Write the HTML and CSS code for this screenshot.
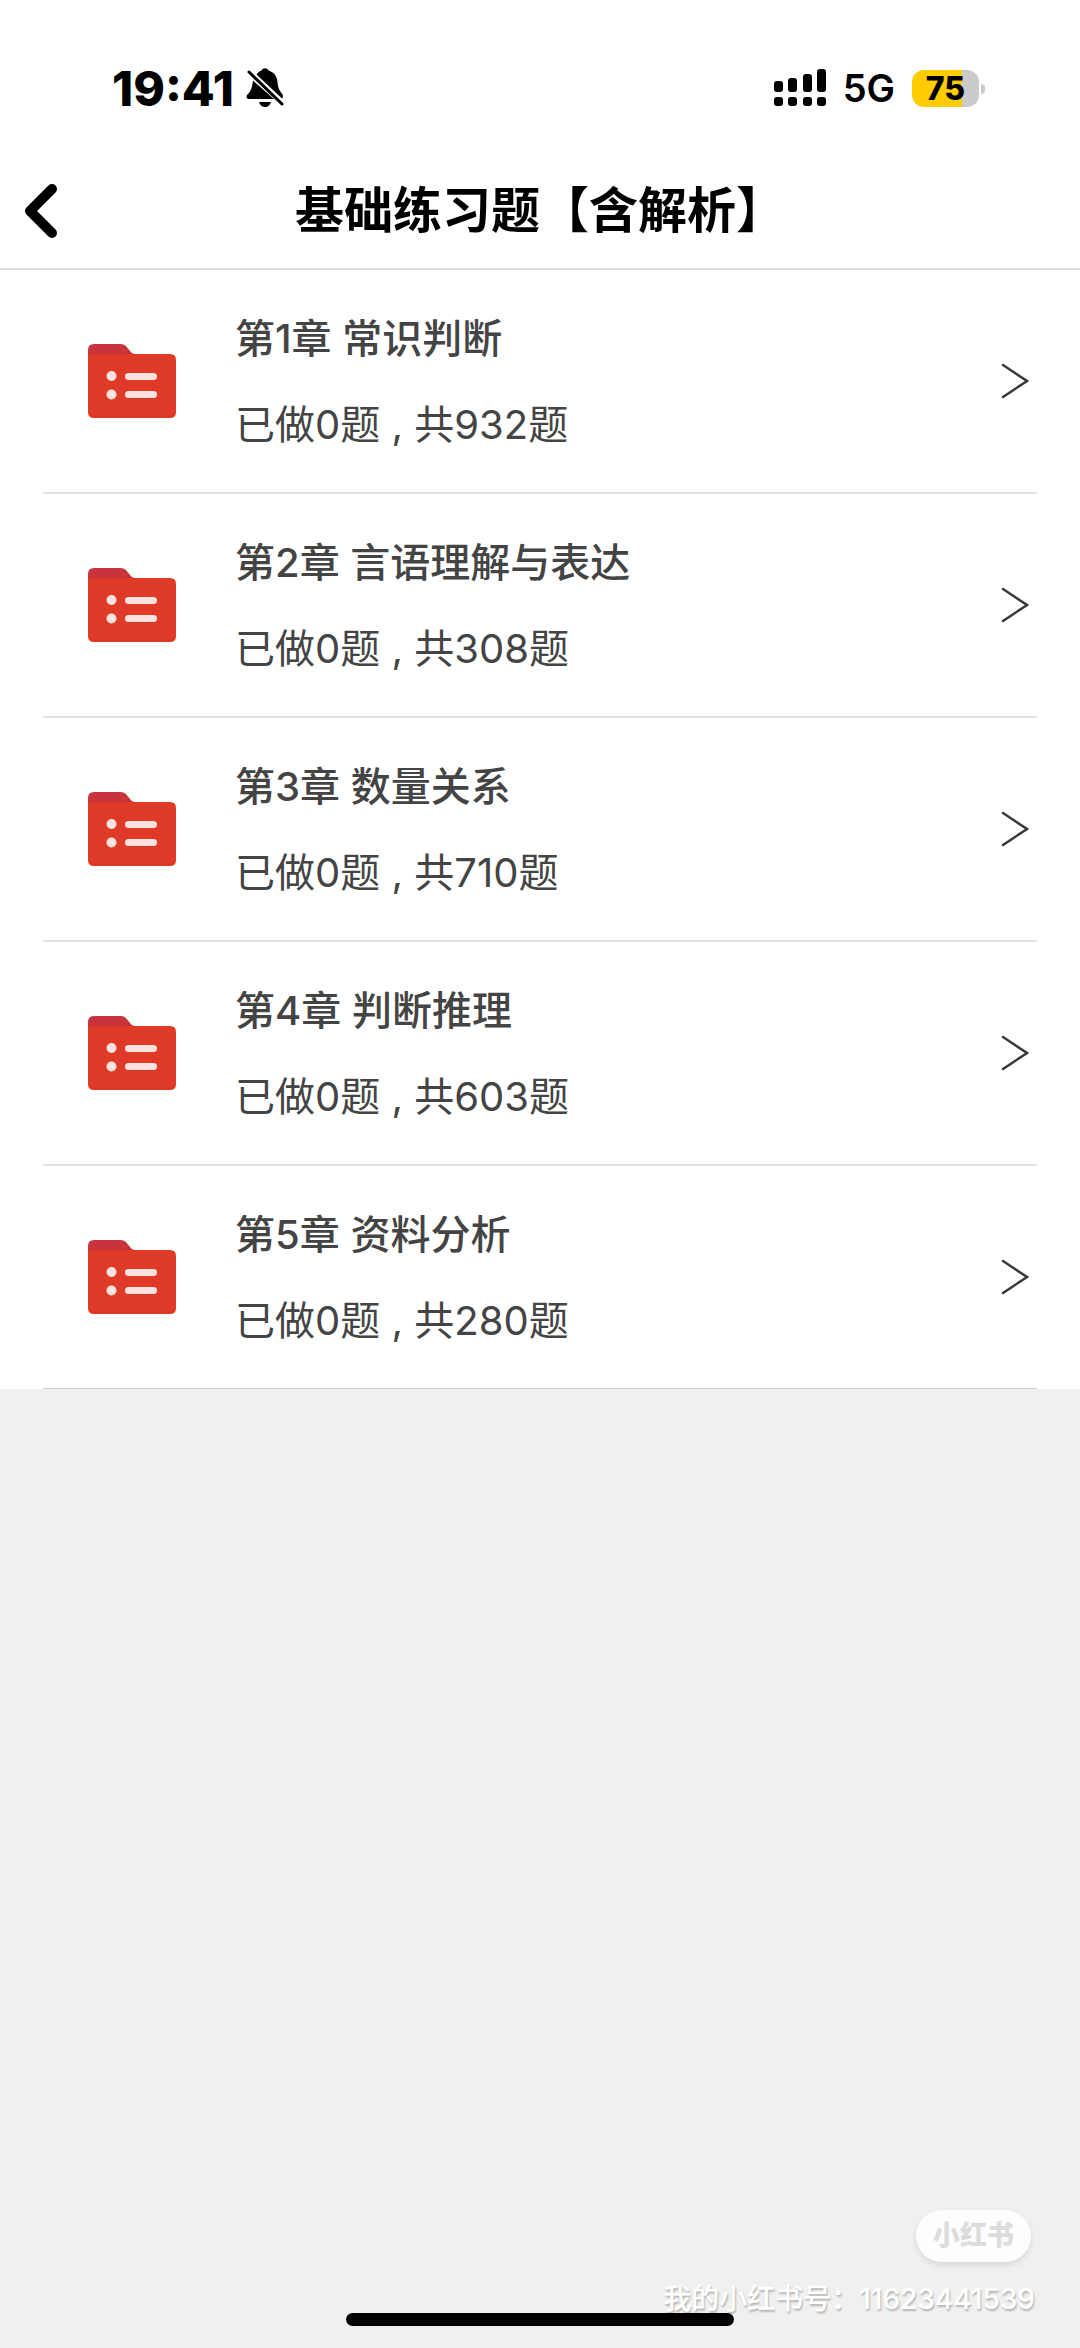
FILE: index.html
```html
<!DOCTYPE html>
<html lang="zh-CN">
<head>
    <meta charset="UTF-8">
    <meta name="viewport" content="width=device-width, initial-scale=1.0">
    <title>基础练习题【含解析】</title>
    <link rel="stylesheet" href="styles.css">
</head>
<body>
    <!-- icons shared by the rows -->
    <svg class="defs" width="0" height="0" aria-hidden="true">
        <symbol id="folder" viewBox="0 0 88 74">
            <path fill="#c8343c" d="M0 20V6Q0 0 6 0H33C40 0 41 10 47 10V20Z"/>
            <path fill="#df3a27" d="M0 10H82Q88 10 88 16V68Q88 74 82 74H6Q0 74 0 68Z"/>
            <ellipse fill="#ffe3df" cx="23.5" cy="32" rx="5" ry="5"/>
            <ellipse fill="#ffe3df" cx="23.5" cy="50.500" rx="5" ry="5"/>
            <rect fill="#ffe3df" x="37" y="29" width="32" height="7" rx="3.500"/>
            <rect fill="#ffe3df" x="37" y="47" width="32" height="7" rx="3.500"/>
        </symbol>
        <symbol id="arrow" viewBox="0 0 28 36">
            <path fill="none" stroke="#3a3a3a" stroke-width="2.500" stroke-linecap="round" d="M2 2L26 18L2 34"/>
        </symbol>
    </svg>

    <header class="header">
        <div class="status">
            <div class="status-left">
                <span class="time">19:41</span>
                <svg class="bell" viewBox="0 0 38 40">
                    <path d="M7 12.500L28 31H3C0 31 0 28 1.500 26.500C5 23 6 20 7 12.500Z"/>
                    <path d="M10.500 6.500C12 4 14 3 15.500 2.500C17 -.5 21 -.5 22.500 2.500C28 4 31 8.500 31.500 14C32 21 34 23 36.500 26.500C37.500 28 37 29.500 36 30.500Z"/>
                    <path d="M13 34H25Q23.500 39 19 39T13 34Z"/>
                    <path fill="none" stroke="#000" stroke-width="3" stroke-linecap="round" d="M3 4L36 36"/>
                </svg>
            </div>
            <div class="status-right">
                <svg class="signal" viewBox="0 0 52 38">
                    <rect x="0" y="12" width="9" height="11" rx="3"/>
                    <rect x="14" y="9" width="9" height="14" rx="3"/>
                    <rect x="29" y="5" width="9" height="18" rx="3"/>
                    <rect x="43" y="0" width="9" height="23" rx="3"/>
                    <rect x="0" y="28" width="9" height="9" rx="3"/>
                    <rect x="14" y="28" width="9" height="9" rx="3"/>
                    <rect x="29" y="28" width="9" height="9" rx="3"/>
                    <rect x="43" y="28" width="9" height="9" rx="3"/>
                </svg>
                <span class="network">5G</span>
                <div class="battery"><span class="level">75</span></div>
            </div>
        </div>
        <div class="nav">
            <button class="back" type="button" aria-label="返回">
                <svg viewBox="0 0 32 54">
                    <path fill="none" stroke="#000" stroke-width="10" stroke-linecap="round" stroke-linejoin="round" d="M27 5L5 27L27 49"/>
                </svg>
            </button>
            <h1>基础练习题【含解析】</h1>
        </div>
    </header>

    <main class="list">
        <a class="row" href="#1">
            <svg class="folder"><use href="#folder"/></svg>
            <div class="info">
                <h2>第1章 常识判断</h2>
                <p>已做0题 , 共932题</p>
            </div>
            <svg class="arrow"><use href="#arrow"/></svg>
        </a>
        <a class="row" href="#2">
            <svg class="folder"><use href="#folder"/></svg>
            <div class="info">
                <h2>第2章 言语理解与表达</h2>
                <p>已做0题 , 共308题</p>
            </div>
            <svg class="arrow"><use href="#arrow"/></svg>
        </a>
        <a class="row" href="#3">
            <svg class="folder"><use href="#folder"/></svg>
            <div class="info">
                <h2>第3章 数量关系</h2>
                <p>已做0题 , 共710题</p>
            </div>
            <svg class="arrow"><use href="#arrow"/></svg>
        </a>
        <a class="row" href="#4">
            <svg class="folder"><use href="#folder"/></svg>
            <div class="info">
                <h2>第4章 判断推理</h2>
                <p>已做0题 , 共603题</p>
            </div>
            <svg class="arrow"><use href="#arrow"/></svg>
        </a>
        <a class="row" href="#5">
            <svg class="folder"><use href="#folder"/></svg>
            <div class="info">
                <h2>第5章 资料分析</h2>
                <p>已做0题 , 共280题</p>
            </div>
            <svg class="arrow"><use href="#arrow"/></svg>
        </a>
    </main>

    <footer class="footer">
        <span class="badge">小红书</span>
        <p class="account">我的小红书号：11623441539</p>
        <div class="home-bar"></div>
    </footer>
</body>
</html>
```
FILE: styles.css
```css
*{
    padding: 0;
    margin: 0;
    box-sizing: border-box;
}

body{
    min-height: 100vh;
    display: flex;
    flex-direction: column;
    background-color: #f0f0f0;
    font-family: Inter, "Noto Sans CJK SC", sans-serif;
    color: #444;
}
svg{
    display: block;
    flex-shrink: 0;
}
.defs{
    position: absolute;
}

/* header */
.header{
    background-color: white;
    border-bottom: 2px solid #dcdcdc;
    color: black;
}
.status{
    display: flex;
    justify-content: space-between;
    align-items: center;
    height: 150px;
    padding: 26px 101px 0 112px;
}
.status-left, .status-right{
    display: flex;
    align-items: center;
}
.time{
    font-size: 48px;
    font-weight: 800;
}
.bell{
    width: 38px;
    height: 40px;
    margin-left: 12px;
}
.signal{
    width: 52px;
    height: 38px;
}
.network{
    margin-left: 17px;
    font-size: 38px;
    font-weight: 600;
}
.battery{
    position: relative;
    width: 67px;
    height: 37px;
    margin-left: 17px;
    border-radius: 12px;
    background: linear-gradient(to right, #fc0 75%, #cbcbcb 75%);
    text-align: center;
}
.battery::after{
    content: "";
    position: absolute;
    right: -6px;
    top: 14px;
    width: 4px;
    height: 10px;
    border-radius: 0 4px 4px 0;
    background-color: #cbcbcb;
}
.level{
    display: block;
    font-size: 32px;
    font-weight: 800;
    line-height: 37px;
}
.nav{
    position: relative;
    display: flex;
    justify-content: center;
    align-items: center;
    height: 118px;
    padding-top: 4px;
}
.back{
    position: absolute;
    left: 25px;
    width: 32px;
    height: 54px;
    border: none;
    background: none;
    cursor: pointer;
}
h1{
    font-size: 49px;
    font-weight: 700;
    line-height: 72px;
}

/* chapter list */
.list{
    padding: 0 43px;
    background-color: white;
}
.row{
    display: flex;
    align-items: center;
    height: 224px;
    padding: 0 8px 0 45px;
    border-bottom: 2px solid #e2e2e2;
    color: inherit;
    text-decoration: none;
}
.row:last-child{
    border-bottom-width: 1px;
    border-color: #ccc;
    height: 223px;
}
.folder{
    width: 88px;
    height: 74px;
}
.info{
    flex: 1;
    margin-left: 59px;
    padding-top: 2px;
}
.info h2, .info p{
    font-size: 40px;
    line-height: 60px;
}
.info h2{
    font-weight: 500;
}
.info p{
    margin-top: 26px;
    font-weight: 400;
}
.arrow{
    width: 28px;
    height: 36px;
}

/* footer */
.footer{
    position: relative;
    display: flex;
    flex-direction: column;
    align-items: flex-end;
    margin-top: auto;
    padding: 0 45px 28px;
}
.badge{
    margin-right: 4px;
    padding: 0 17px;
    border-radius: 26px;
    background-color: #fdfdfd;
    box-shadow: 0 3px 6px rgba(0, 0, 0, 0.1);
    color: #dcdcdc;
    font-size: 27px;
    font-weight: 900;
    line-height: 52px;
}
.account{
    margin-top: 16px;
    color: white;
    font-size: 28px;
    font-weight: 500;
    line-height: 42px;
    text-shadow: 1px 2px 2px rgba(0, 0, 0, 0.25);
}
.home-bar{
    position: absolute;
    left: 32%;
    right: 32%;
    bottom: 22px;
    height: 13px;
    border-radius: 7px;
    background-color: black;
}
```
